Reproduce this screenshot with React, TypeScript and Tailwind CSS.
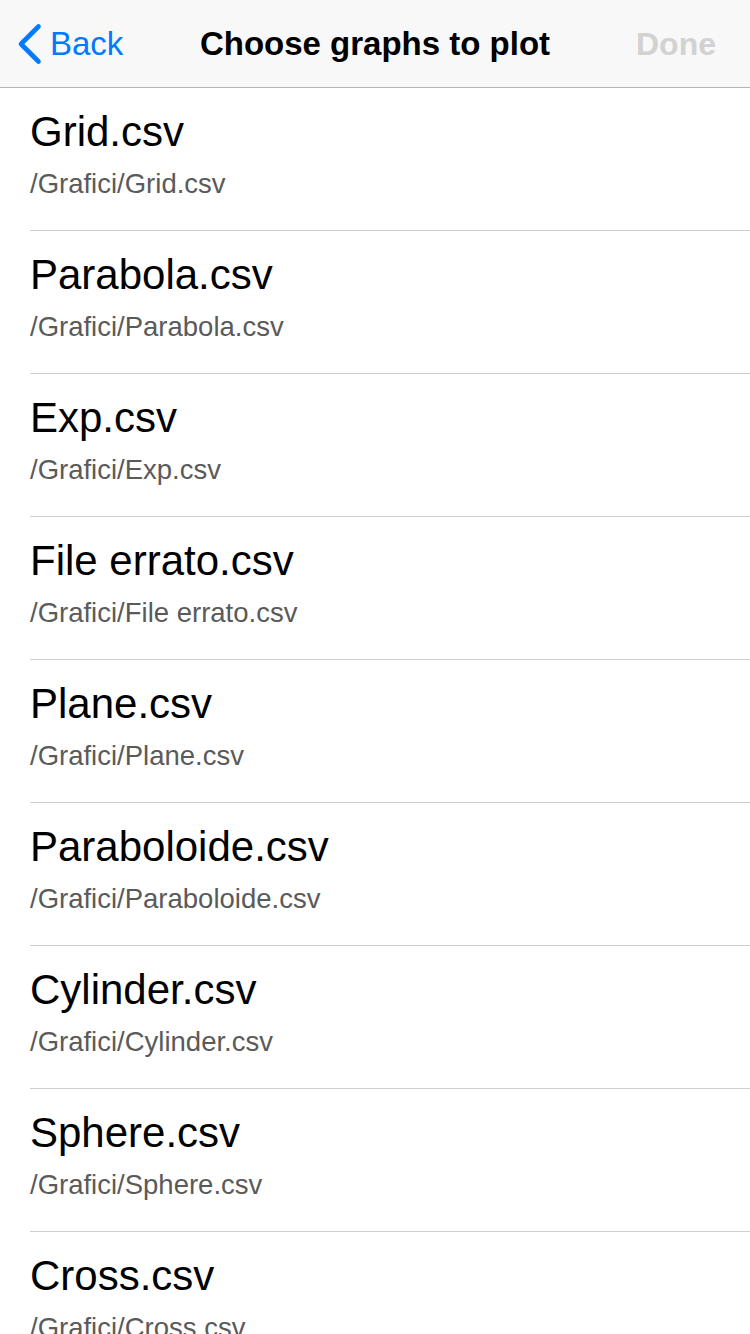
import { useState } from 'react';

type GraphFile = {
  name: string;
  path: string;
};

const files: GraphFile[] = [
  { name: 'Grid.csv', path: '/Grafici/Grid.csv' },
  { name: 'Parabola.csv', path: '/Grafici/Parabola.csv' },
  { name: 'Exp.csv', path: '/Grafici/Exp.csv' },
  { name: 'File errato.csv', path: '/Grafici/File errato.csv' },
  { name: 'Plane.csv', path: '/Grafici/Plane.csv' },
  { name: 'Paraboloide.csv', path: '/Grafici/Paraboloide.csv' },
  { name: 'Cylinder.csv', path: '/Grafici/Cylinder.csv' },
  { name: 'Sphere.csv', path: '/Grafici/Sphere.csv' },
  { name: 'Cross.csv', path: '/Grafici/Cross.csv' },
];

function BackChevron() {
  return (
    <svg width="26" height="42" viewBox="0 0 26 42" fill="none">
      <path
        d="M22.5 3.5 L5 21 L22.5 38.5"
        stroke="#007aff"
        strokeWidth="4.6"
        strokeLinecap="round"
        strokeLinejoin="round"
      />
    </svg>
  );
}

export default function App() {
  const [selected, setSelected] = useState<string[]>([]);

  const toggle = (path: string) =>
    setSelected((prev) =>
      prev.includes(path) ? prev.filter((p) => p !== path) : [...prev, path]
    );

  return (
    <div className="min-h-screen bg-white font-['Liberation_Sans',Arial,sans-serif]">
      {/* Navigation bar */}
      <header className="grid h-[88px] grid-cols-[1fr_auto_1fr] items-center border-b border-[#b4b4b4] bg-[#f8f8f8]">
        <button className="flex items-center gap-[8px] justify-self-start pl-[16px] text-[33px] leading-[40px] text-[#007aff]">
          <BackChevron />
          <span>Back</span>
        </button>
        <h1 className="text-[33px] font-bold leading-[40px] text-black">
          Choose graphs to plot
        </h1>
        <button
          disabled={selected.length === 0}
          className="justify-self-end pr-[34px] text-[32px] font-bold leading-[40px] text-[#d2d2d2]"
        >
          Done
        </button>
      </header>

      {/* File list */}
      <ul>
        {files.map((file) => (
          <li key={file.path} className="pl-[30px]">
            <div
              onClick={() => toggle(file.path)}
              className="flex h-[143px] w-full cursor-pointer flex-col items-start border-b border-[#cfcfd3] pt-[20px]"
            >
              <div className="text-[42px] leading-[48px] text-black">{file.name}</div>
              <div className="mt-[12px] text-[27.5px] leading-[32px] text-[#5a5a5a]">
                {file.path}
              </div>
            </div>
          </li>
        ))}
      </ul>
    </div>
  );
}
